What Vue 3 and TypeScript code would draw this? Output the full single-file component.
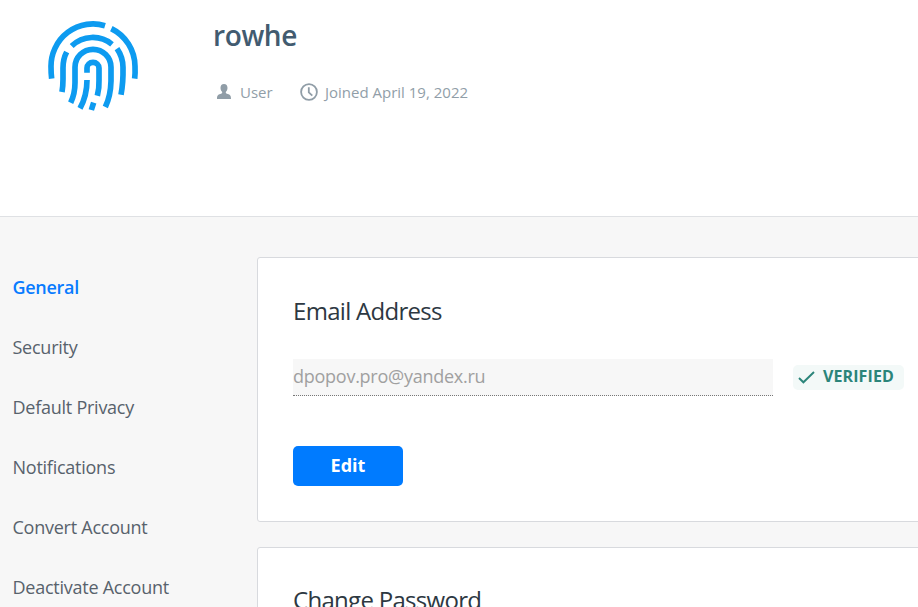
<script setup lang="ts">
import { ref } from 'vue'

const sections: string[] = [
  'General',
  'Security',
  'Default Privacy',
  'Notifications',
  'Convert Account',
  'Deactivate Account',
]
const active = ref<string>('General')
const email = 'dpopov.pro@yandex.ru'
</script>

<template>
  <div class="page">
    <header class="profile">
      <svg class="avatar" viewBox="0 0 330 318" aria-hidden="true">
        <path d="M41 200Q39 185 39 163A126 127 0 0 1 201 41M220 50A126 127 0 0 1 291 163Q292 185 290 200" />
        <path d="M101 102A91 91 0 0 1 222 97M86 120Q75 141 75 168V202Q75 222 72 240M237 110Q255 136 255 166Q256 212 249 248" />
        <path d="M98 272Q111 245 111 212V166A54 54 0 0 1 219 166V207Q218 252 202 285" />
        <path d="M147 182V168A18 17 0 0 1 183 168V205Q184 228 178 251M147 204Q147 251 126 289M167 272L160 294" />
      </svg>
      <div class="info">
        <h1>rowhe</h1>
        <div class="meta">
          <svg class="person" viewBox="0 0 14 15" aria-hidden="true">
            <path d="M7 0C4.7 0 3.4 1.6 3.5 4.1C3.5 6 4.5 7.3 5.2 8.1C5.4 9.2 4.7 9.6 3.2 10.1C1 10.9 0 11.5 0 15H14C14 11.5 13 10.9 10.8 10.1C9.3 9.6 8.6 9.2 8.8 8.1C9.5 7.3 10.5 6 10.5 4.1C10.6 1.6 9.3 0 7 0Z" />
          </svg>
          <span class="role">User</span>
          <svg class="clock" viewBox="0 0 18 18" aria-hidden="true">
            <circle cx="9" cy="9" r="7.9" />
            <path d="M8.8 4.2V9.4L12.3 12.7" />
          </svg>
          <span class="joined">Joined April 19, 2022</span>
        </div>
      </div>
    </header>
    <div class="body">
      <nav>
        <a v-for="s in sections" :key="s" :class="{ active: s === active }" @click="active = s"><span>{{ s }}</span></a>
      </nav>
      <main>
        <section class="card">
          <h2>Email Address</h2>
          <div class="row">
            <div class="field">{{ email }}</div>
            <div class="badge">
              <svg viewBox="0 0 17 13" aria-hidden="true"><path d="M1 7L5.4 11.3L16 1" /></svg>
              <span>VERIFIED</span>
            </div>
          </div>
          <button type="button">Edit</button>
        </section>
        <section class="card">
          <h2>Change Password</h2>
        </section>
      </main>
    </div>
  </div>
</template>

<style>
body { margin: 0; overflow: hidden; }
</style>

<style scoped>
* { box-sizing: border-box; }
.page { height: 607px; overflow: hidden; background: #f7f7f7; font-family: "Open Sans", sans-serif; }
.profile { display: flex; height: 217px; background: #fff; border-bottom: 1px solid #dfe1e4; padding: 12px 0 0 38px; }
.avatar { width: 110px; height: 106px; fill: none; stroke: #0d9bf0; stroke-width: 17; stroke-linejoin: round; }
.info { margin-left: 65px; }
h1 { margin: 3px 0 0; font-size: 28px; line-height: 40px; font-weight: 600; letter-spacing: -0.4px; color: #425b70; }
.meta { display: flex; align-items: center; height: 24px; margin-top: 25px; padding-left: 4px; font-size: 15px; color: #919ea8; }
.person { width: 14px; height: 15px; margin-top: -2px; margin-left: -0.5px; fill: #909da7; }
.role { margin-left: 9.5px; width: 60px; }
.clock { width: 18px; height: 18px; fill: none; stroke: #909da7; stroke-width: 1.8; }
.joined { margin-left: 7px; }
.body { display: flex; padding-top: 40px; }
nav { width: 257px; flex: none; padding-left: 12.5px; }
nav a { display: flex; align-items: center; height: 60px; font-size: 18px; letter-spacing: -0.25px; color: #58626c; cursor: pointer; }
nav .active { color: #087bff; font-weight: 600; letter-spacing: -0.3px; }
main { flex: none; width: 700px; }
.card { height: 265px; margin-bottom: 25px; padding: 35px; background: #fff; border: 1px solid #d8dade; border-radius: 3px; }
h2 { margin: 0; font-size: 24px; line-height: 36px; font-weight: 400; letter-spacing: -0.7px; color: #2d3842; }
.card + .card h2 { margin-top: -1px; }
.row { display: flex; margin-top: 30px; }
.field { width: 480px; height: 37px; line-height: 34px; background: #f7f7f7; border-bottom: 1px dotted #777; font-size: 18px; letter-spacing: -0.26px; color: #a0a0a0; }
.badge { display: flex; align-items: center; width: 111px; height: 25px; margin: 6px 0 0 20px; padding-left: 5px; border-radius: 5px; background: #f3f9f8; color: #2b857a; font-size: 16px; font-weight: 700; letter-spacing: 0.1px; }
.badge span { padding-bottom: 3px; }
.badge svg { width: 17px; height: 13px; margin-right: 8px; fill: none; stroke: #2b857a; stroke-width: 1.9; }
button { display: block; width: 110px; height: 40px; margin-top: 50px; padding: 0 0 2px; border: 0; border-radius: 5px; background: #007bff; color: #fff; font: 700 18px "Open Sans", sans-serif; }
</style>
